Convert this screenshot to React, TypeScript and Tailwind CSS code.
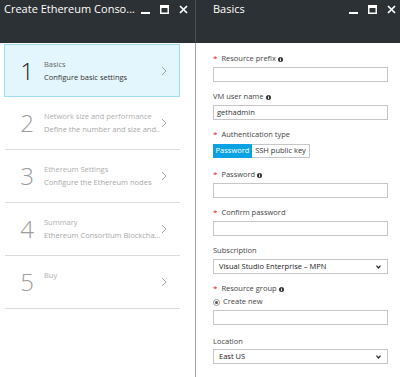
import React from 'react';

const steps = [
  { n: '1', title: 'Basics', sub: 'Configure basic settings' },
  { n: '2', title: 'Network size and performance', sub: 'Define the number and size and..' },
  { n: '3', title: 'Ethereum Settings', sub: 'Configure the Ethereum nodes' },
  { n: '4', title: 'Summary', sub: 'Ethereum Consortium Blockcha...' },
  { n: '5', title: 'Buy', sub: '' },
];

function WindowButtons() {
  return (
    <div className="flex items-center gap-[10px] h-[16px]">
      <svg width="9" height="9" viewBox="0 0 9 9">
        <rect x="0" y="7" width="9" height="2" fill="#fff" />
      </svg>
      <svg width="9" height="9" viewBox="0 0 9 9">
        <rect x="0.75" y="0.75" width="7.5" height="7.5" fill="none" stroke="#fff" strokeWidth="1.5" />
        <rect x="0" y="0" width="9" height="3" fill="#fff" />
      </svg>
      <svg width="9" height="9" viewBox="0 0 9 9">
        <path d="M1 1 L8 8 M8 1 L1 8" stroke="#fff" strokeWidth="1.7" />
      </svg>
    </div>
  );
}

function Chevron() {
  return (
    <svg width="6" height="10" viewBox="0 0 6 10">
      <path d="M1 1 L5 5 L1 9" fill="none" stroke="#9a9a9a" strokeWidth="0.9" />
    </svg>
  );
}

function Info() {
  return (
    <svg width="5" height="5" viewBox="0 0 10 10" className="ml-[2px]">
      <circle cx="5" cy="5" r="5" fill="#333" />
      <rect x="4.1" y="4" width="1.8" height="4.2" fill="#fff" />
      <rect x="4.1" y="1.6" width="1.8" height="1.6" fill="#fff" />
    </svg>
  );
}

function Label({ text, required, info }: { text: string; required?: boolean; info?: boolean }) {
  return (
    <div className="h-[12px] flex items-center text-[7.5px] text-[#444]">
      {required && <span className="text-[#e81123] mr-[4px] text-[8px] leading-none -mt-[2px]">*</span>}
      <span>{text}</span>
      {info && <Info />}
    </div>
  );
}

function TextBox({ value }: { value?: string }) {
  return (
    <div className="h-[15px] w-[175px] border border-[#c6c6c6] bg-white flex items-center px-[3px] text-[7.5px] text-[#333]">
      {value}
    </div>
  );
}

function SelectBox({ value }: { value: string }) {
  return (
    <div className="h-[15px] w-[175px] border border-[#c6c6c6] bg-white flex items-center pl-[5px] pr-[6px] text-[7.5px] text-[#222]">
      <span className="flex-1">{value}</span>
      <svg width="5" height="4" viewBox="0 0 5 4">
        <path d="M0.5 0.7 L2.5 3 L4.5 0.7" fill="none" stroke="#222" strokeWidth="1.2" />
      </svg>
    </div>
  );
}

export default function App() {
  return (
    <div className="flex w-[400px] h-[377px] bg-white font-['Open_Sans',sans-serif] overflow-hidden">
      {/* Steps blade */}
      <div className="w-[196px] flex flex-col">
        <div className="h-[43px] bg-[#2c3135] border-r border-[#4b5054] flex items-start justify-between pl-[4px] pr-[7px] pt-[1px]">
          <span className="text-[11px] leading-[16px] text-white whitespace-nowrap">Create Ethereum Conso...</span>
          <WindowButtons />
        </div>
        <div className="flex-1 border-r border-[#a3a3a3] pt-[1px]">
          {steps.map((s, i) => {
            const active = i === 0;
            return (
              <div
                key={s.n}
                className={
                  active
                    ? 'ml-[4px] w-[176px] h-[53px] border border-[#a2dded] bg-[#e4f6fd] flex items-center pl-[11px] pr-[12px]'
                    : 'ml-[5px] w-[175px] h-[53px] border-b border-[#dcdcdc] flex items-center pl-[11px] pr-[13px]'
                }
              >
                <div className={`w-[22px] text-center text-[24px] leading-none font-light ${active ? 'text-[#222]' : 'text-[#9c9c9c]'}`}>
                  {s.n}
                </div>
                <div className="ml-[6px] flex-1 text-[7.5px] leading-[13px] whitespace-nowrap">
                  <div className={active ? 'text-[#666]' : 'text-[#b0b0b0]'}>{s.title}</div>
                  <div className={active ? 'text-[#333]' : 'text-[#a8a8a8]'}>{s.sub || '\u00a0'}</div>
                </div>
                <Chevron />
              </div>
            );
          })}
        </div>
      </div>

      {/* Basics blade */}
      <div className="flex-1 flex flex-col">
        <div className="h-[43px] bg-[#2c3135] flex items-start justify-between pl-[17px] pr-[4px] pt-[1px]">
          <span className="text-[11px] leading-[16px] text-white">Basics</span>
          <WindowButtons />
        </div>
        <div className="pl-[17px] pt-[10px]">
          <div className="mb-[9px]">
            <Label text="Resource prefix" required info />
            <div className="mt-[2px]"><TextBox /></div>
          </div>
          <div className="mb-[9px]">
            <Label text="VM user name" info />
            <div className="mt-[2px]"><TextBox value="gethadmin" /></div>
          </div>
          <div className="mb-[11px]">
            <Label text="Authentication type" required />
            <div className="mt-[3px] flex h-[14px] text-[7.5px]">
              <div className="w-[39px] bg-[#0ba2e3] text-white flex items-center justify-center border border-[#0ba2e3]">Password</div>
              <div className="w-[58px] border border-l-0 border-[#c6c6c6] text-[#333] flex items-center justify-center">SSH public key</div>
            </div>
          </div>
          <div className="mb-[9px]">
            <Label text="Password" required info />
            <div className="mt-[2px]"><TextBox /></div>
          </div>
          <div className="mb-[9px]">
            <Label text="Confirm password" required />
            <div className="mt-[2px]"><TextBox /></div>
          </div>
          <div className="mb-[9px]">
            <Label text="Subscription" />
            <div className="mt-[2px]"><SelectBox value="Visual Studio Enterprise – MPN" /></div>
          </div>
          <div className="mb-[11px]">
            <Label text="Resource group" required info />
            <div className="mt-[1px] h-[12px] flex items-center text-[7.5px] text-[#444]">
              <span className="w-[7px] h-[7px] rounded-full border border-[#999] flex items-center justify-center">
                <span className="w-[3px] h-[3px] rounded-full bg-[#555]" />
              </span>
              <span className="ml-[3px]">Create new</span>
            </div>
            <div className="mt-[2px]"><TextBox /></div>
          </div>
          <div>
            <Label text="Location" />
            <div className="mt-[1px]"><SelectBox value="East US" /></div>
          </div>
        </div>
      </div>
    </div>
  );
}
